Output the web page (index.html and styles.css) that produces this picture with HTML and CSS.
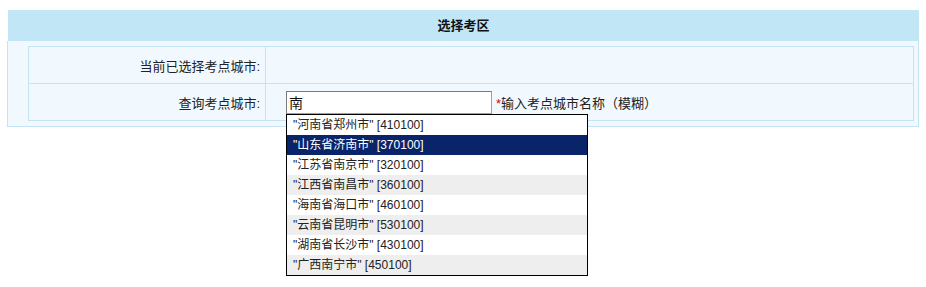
FILE: index.html
```html
<!DOCTYPE html>
<html lang="zh-CN">
<head>
  <meta charset="UTF-8">
  <title>选择考区</title>
  <link rel="stylesheet" href="styles.css">
</head>
<body>

  <div class="box">
    <div class="box-title">选择考区</div>
    <div class="box-body">
      <table class="form-table">
        <tr>
          <th>当前已选择考点城市:</th>
          <td></td>
        </tr>
        <tr>
          <th>查询考点城市:</th>
          <td>
            <div class="search">
              <input class="city-input" type="text" value="南">
              <span class="hint"><em>*</em>输入考点城市名称（模糊）</span>
              <ul class="suggest">
                <li>"河南省郑州市" [410100]</li>
                <li class="active">"山东省济南市" [370100]</li>
                <li>"江苏省南京市" [320100]</li>
                <li>"江西省南昌市" [360100]</li>
                <li>"海南省海口市" [460100]</li>
                <li>"云南省昆明市" [530100]</li>
                <li>"湖南省长沙市" [430100]</li>
                <li>"广西南宁市" [450100]</li>
              </ul>
            </div>
          </td>
        </tr>
      </table>
    </div>
  </div>

</body>
</html>
```

FILE: styles.css
```css
html,
body {
  min-height: 287px;
}

body {
  margin: 0;
  padding: 10px 7px 0 7px;
  box-sizing: border-box;
  font-family: "Liberation Sans", "Noto Sans CJK SC", sans-serif;
  font-size: 13px;
  color: #222;
  background: #fff;
}

.box {
  width: 912px;
}

.box-title {
  margin-left: 1px;
  height: 31px;
  line-height: 31px;
  background: #c1e6f6;
  text-align: center;
  font-weight: bold;
  color: #111;
}

.box-body {
  background: #f1f9fe;
  border: 1px solid #c4e3f5;
  border-top: none;
  padding: 5px 5px 5px 20px;
}

.form-table {
  width: 886px;
  border-collapse: collapse;
}

.form-table th,
.form-table td {
  border: 1px solid #c4e3f5;
  height: 36px;
  padding: 0;
}

.form-table th {
  width: 231px;
  padding-right: 5px;
  text-align: right;
  font-weight: normal;
}

.form-table td {
  padding-left: 20px;
}

.search {
  position: relative;
  display: flex;
  align-items: center;
}

.city-input {
  width: 206px;
  height: 23px;
  box-sizing: border-box;
  margin: 0;
  padding: 0 2px;
  border: 1px solid #7a7a7a;
  border-right-color: #a0a0a0;
  border-bottom-color: #a0a0a0;
  font: inherit;
  font-size: 14px;
  color: #111;
  background: #fff;
}

.hint {
  margin-left: 4px;
}

.hint em {
  font-style: normal;
  color: #e60000;
}

.suggest {
  position: absolute;
  z-index: 10;
  left: 0;
  top: 23px;
  width: 300px;
  margin: 0;
  padding: 0;
  list-style: none;
  border: 1px solid #000;
  background: #fff;
  font-size: 12px;
}

.suggest li {
  height: 20px;
  line-height: 20px;
  padding-left: 6px;
  white-space: nowrap;
}

.suggest li:nth-child(even) {
  background: #eee;
}

.suggest li.active {
  background: #0a246a;
  color: #fff;
}
```
